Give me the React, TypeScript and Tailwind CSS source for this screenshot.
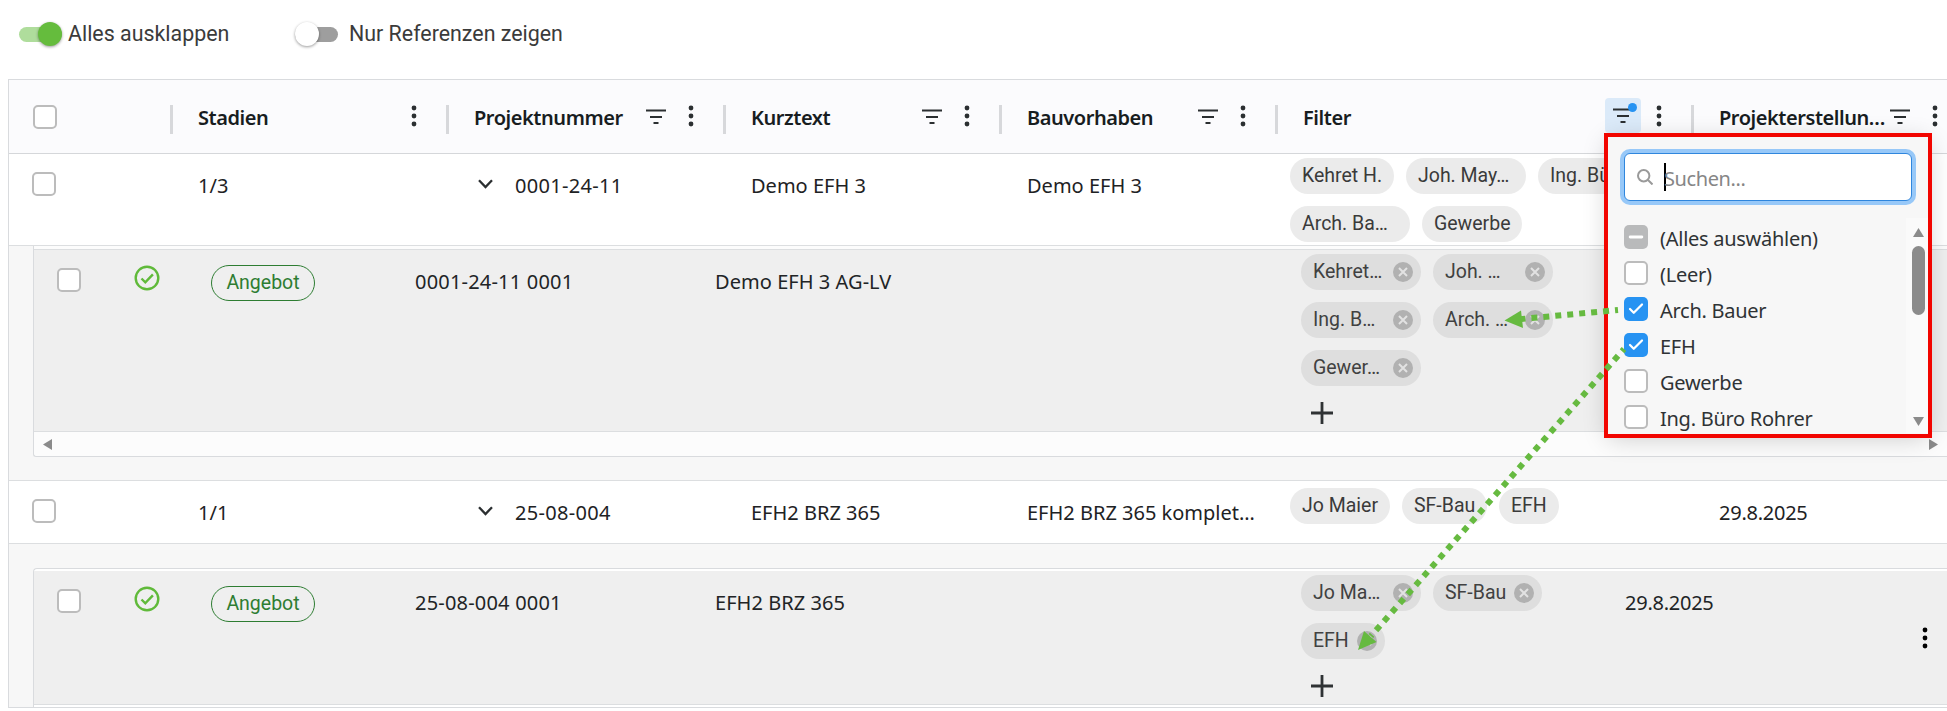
import type { ReactNode } from 'react';
import { Check, Minus } from 'lucide-react';

type CheckState = 'off' | 'on' | 'partial';

interface ChipData {
  label: string;
  width: string;
}

interface DetailData {
  number: string;
  text: string;
  chipRows: ChipData[][];
  date?: string;
  menu?: boolean;
}

const FILTER_OPTIONS: { label: string; state: CheckState }[] = [
  { label: '(Alles auswählen)', state: 'partial' },
  { label: '(Leer)', state: 'off' },
  { label: 'Arch. Bauer', state: 'on' },
  { label: 'EFH', state: 'on' },
  { label: 'Gewerbe', state: 'off' },
  { label: 'Ing. Büro Rohrer', state: 'off' },
];

const DETAILS: DetailData[] = [
  {
    number: '0001-24-11 0001',
    text: 'Demo EFH 3 AG-LV',
    chipRows: [
      [
        { label: 'Kehret…', width: 'w-[120px]' },
        { label: 'Joh. …', width: 'w-[120px]' },
      ],
      [
        { label: 'Ing. B…', width: 'w-[120px]' },
        { label: 'Arch. …', width: 'w-[120px]' },
      ],
      [{ label: 'Gewer…', width: 'w-[120px]' }],
    ],
  },
  {
    number: '25-08-004 0001',
    text: 'EFH2 BRZ 365',
    chipRows: [
      [
        { label: 'Jo Ma…', width: 'w-[120px]' },
        { label: 'SF-Bau', width: 'w-[109px]' },
      ],
      [{ label: 'EFH', width: 'w-[84px]' }],
    ],
    date: '29.8.2025',
    menu: true,
  },
];

function Checkbox({ state = 'off' }: { state?: CheckState }) {
  if (state === 'off') {
    return <div className="size-6 shrink-0 rounded-[5px] border-2 border-[#bcbcbc] bg-white" />;
  }
  if (state === 'partial') {
    return (
      <div className="flex size-6 shrink-0 items-center justify-center rounded-[5px] bg-[#b9babb] text-white">
        <Minus className="size-5" strokeWidth={3.4} />
      </div>
    );
  }
  return (
    <div className="flex size-6 shrink-0 items-center justify-center rounded-[5px] bg-[#2793f2] text-white">
      <Check className="size-[18px]" strokeWidth={3} />
    </div>
  );
}

function Dots({ className = 'text-[#2b2f31]' }: { className?: string }) {
  return (
    <svg className={`h-[22px] w-[6px] shrink-0 ${className}`} viewBox="0 0 6 22" fill="currentColor">
      <circle cx="3" cy="3" r="2.4" />
      <circle cx="3" cy="11" r="2.4" />
      <circle cx="3" cy="19" r="2.4" />
    </svg>
  );
}

function FilterIcon() {
  return (
    <svg className="h-4 w-5 shrink-0 text-[#2b2f31]" viewBox="0 0 20 16" stroke="currentColor" strokeWidth="2.2">
      <path d="M0 1.5H20M4 8H16M7.5 14H12.5" />
    </svg>
  );
}

function HeaderCell({
  label,
  width,
  filter = true,
  active = false,
  pad = 'pr-[29px]',
}: {
  label: string;
  width: string;
  filter?: boolean;
  active?: boolean;
  pad?: string;
}) {
  return (
    <div className={`flex shrink-0 items-center ${width} ${pad}`}>
      <div className="mt-[6px] h-[29px] w-[3px] shrink-0 bg-[#d7d8db]" />
      <span className="mt-[3px] ml-[25px] w-0 flex-1 text-[20px] leading-7 font-semibold tracking-[-0.45px] whitespace-nowrap text-[#181d1f]">
        {label}
      </span>
      {filter && !active && <FilterIcon />}
      {active && (
        <div className="relative -mt-[2px] mr-[-7px] flex h-[35px] w-9 items-center justify-center rounded-[4px] bg-[#dbeaf9]">
          <FilterIcon />
          <span className="absolute top-[5px] right-1 size-[9px] rounded-full bg-[#2793f2]" />
        </div>
      )}
      <div className="-mt-px ml-[22px] flex">
        <Dots />
      </div>
    </div>
  );
}

function Toggle({ on }: { on: boolean }) {
  return (
    <div className={`flex h-[15px] w-[43px] items-center rounded-full ${on ? 'justify-end bg-[#afdd9c]' : 'bg-[#9e9e9e]'}`}>
      <div
        className={`size-6 shrink-0 rounded-full shadow-[0_1px_3px_rgba(0,0,0,0.4)] ${on ? 'bg-[#65bc3d]' : 'bg-white'}`}
      />
    </div>
  );
}

function Chip({ label, width }: ChipData) {
  return (
    <div
      className={`h-9 shrink-0 rounded-full bg-[#ebebeb] pl-3 font-[Roboto] text-[19.5px] leading-[35px] whitespace-nowrap text-[#3a3a3a] ${width}`}
    >
      {label}
    </div>
  );
}

function RemovableChip({ label, width }: ChipData) {
  return (
    <div
      className={`flex h-9 shrink-0 items-center justify-between rounded-full bg-[#dedede] pr-2 pl-3 font-[Roboto] text-[19.5px] leading-9 whitespace-nowrap text-[#414141] ${width}`}
    >
      <span>{label}</span>
      <svg className="size-5 shrink-0" viewBox="0 0 20 20">
        <circle cx="10" cy="10" r="10" fill="#b1b1b1" />
        <path d="M6 6l8 8M14 6l-8 8" stroke="#e2e2e2" strokeWidth="2" />
      </svg>
    </div>
  );
}

function ProjectRow({
  count,
  number,
  name,
  project,
  date,
  height,
  children,
}: {
  count: string;
  number: string;
  name: string;
  project: string;
  date?: string;
  height: string;
  children: ReactNode;
}) {
  return (
    <div className={`flex shrink-0 border-b border-[#dcdee0] bg-white text-[20px] leading-7 whitespace-nowrap text-[#1e2224] ${height}`}>
      <div className="w-[161px] shrink-0 pt-[18px] pl-[23px]">
        <Checkbox />
      </div>
      <div className="w-[276px] shrink-0 pt-[18px] pl-[28px]">{count}</div>
      <div className="flex w-[277px] shrink-0 pt-[18px] pl-[32px]">
        <svg className="mt-[7px] mr-[22px] h-[10px] w-[15px]" viewBox="0 0 15 10" fill="none" stroke="#2b2f31" strokeWidth="2.3">
          <path d="M1 1.2L7.5 8L14 1.2" />
        </svg>
        <span className="tracking-[0.3px]">{number}</span>
      </div>
      <div className="w-[276px] shrink-0 pt-[18px] pl-[28px]">{name}</div>
      <div className="w-[276px] shrink-0 pt-[18px] pl-[28px]">{project}</div>
      <div className="w-[416px] shrink-0 pl-[15px]">{children}</div>
      <div className="pt-[18px] pl-[28px] tracking-[-0.25px]">{date}</div>
    </div>
  );
}

function DetailRow({ detail, height }: { detail: DetailData; height: string }) {
  return (
    <div className={`flex shrink-0 border-b border-[#dcdee0] bg-[#efefef] text-[20px] leading-7 whitespace-nowrap text-[#212426] ${height}`}>
      <div className="w-[100px] shrink-0 pt-[18px] pl-[23px]">
        <Checkbox />
      </div>
      <svg className="mt-[15px] size-[26px] shrink-0" viewBox="0 0 26 26" fill="none" stroke="#60ba3a" strokeWidth="2.4">
        <circle cx="13" cy="13" r="11.3" />
        <path d="M7.5 13.5l3.8 3.8 7.6-8" />
      </svg>
      <div className="w-[255px] shrink-0 pt-[15px] pl-[51px]">
        <div className="h-9 w-[104px] rounded-full border-[1.5px] border-[#2e7d32] text-center font-[Roboto] text-[19.5px] leading-[34px] text-[#2e7d32]">
          Angebot
        </div>
      </div>
      <div className="w-[300px] shrink-0 pt-[18px] tracking-[0.2px]">{detail.number}</div>
      <div className="w-[586px] shrink-0 pt-[18px] tracking-[0.05px]">{detail.text}</div>
      <div className="flex w-[324px] shrink-0 flex-col gap-3 pt-1">
        {detail.chipRows.map((row, index) => (
          <div key={index} className="flex gap-3">
            {row.map((chip) => (
              <RemovableChip key={chip.label} {...chip} />
            ))}
          </div>
        ))}
        <svg className="mt-[4px] ml-[10px] size-[22px]" viewBox="0 0 22 22" stroke="#2f3234" strokeWidth="2.8">
          <path d="M11 0V22M0 11H22" />
        </svg>
      </div>
      <div className="w-[297px] shrink-0 pt-[18px] tracking-[-0.25px]">{detail.date}</div>
      {detail.menu && (
        <div className="flex items-center">
          <Dots className="text-black" />
        </div>
      )}
    </div>
  );
}

function FilterPopup() {
  return (
    <div className="absolute top-[133px] left-[1604px] flex h-[305px] w-[328px] flex-col overflow-hidden border-4 border-[#f20500] bg-[#f7f7f7]">
      <div className="mx-4 mt-4 flex h-12 shrink-0 items-center rounded-[6px] border border-[#2f86dd] bg-white shadow-[0_0_0_4px_#97c8f8]">
        <svg className="ml-3 size-4" viewBox="0 0 16 16" fill="none" stroke="#9a9a9a" strokeWidth="2">
          <circle cx="6.7" cy="6.7" r="5.7" />
          <path d="M11 11l4.5 4.5" />
        </svg>
        <div className="ml-[11px] h-7 w-[2px] bg-black" />
        <span className="-ml-[2px] pt-[3px] text-[20px] tracking-[-0.4px] text-[#868686]">Suchen...</span>
      </div>
      <div className="mt-[17px] flex flex-1">
        <div className="flex flex-1 flex-col gap-3 pt-[7px] pl-4">
          {FILTER_OPTIONS.map((option) => (
            <div key={option.label} className="flex h-6 items-center gap-3">
              <Checkbox state={option.state} />
              <span className="pt-[4px] text-[20px] leading-6 tracking-[-0.27px] whitespace-nowrap text-[#2f3335]">
                {option.label}
              </span>
            </div>
          ))}
        </div>
        <div className="flex h-[215px] w-[22px] flex-col items-center bg-[#fafafa] pt-[10px] pl-[3px]">
          <svg className="h-[9px] w-[11px] shrink-0" viewBox="0 0 11 9" fill="#8b8b8b">
            <path d="M5.5 0L11 9H0Z" />
          </svg>
          <div className="mt-[9px] h-[69px] w-[13px] shrink-0 rounded-full bg-[#8b8b8b]" />
          <svg className="mt-[102px] h-[9px] w-[11px] shrink-0" viewBox="0 0 11 9" fill="#8b8b8b">
            <path d="M0 0H11L5.5 9Z" />
          </svg>
        </div>
      </div>
    </div>
  );
}

/** Dotted arrows from the checked options to the matching chips */
function Arrows() {
  return (
    <svg className="pointer-events-none absolute top-0 left-0" width="1947" height="711" fill="none">
      <g stroke="#66ba40" strokeWidth="6" strokeDasharray="6 6">
        <path d="M1618 310L1516 319.5" strokeDashoffset="3" />
        <path d="M1624 349L1371 636" strokeDashoffset="3" />
      </g>
      <path d="M1504.5 320.5L1521 310.5L1523 328Z" fill="#66ba40" />
      <path d="M1358 650L1364 631L1376.5 642Z" fill="#66ba40" />
    </svg>
  );
}

export default function App() {
  return (
    <div className="relative flex h-[711px] w-[1947px] flex-col overflow-hidden bg-white font-['Noto_Sans',sans-serif]">
      {/* Toggles */}
      <div className="flex h-[79px] shrink-0 items-start pt-[22px] pl-[19px] font-[Roboto] text-[21.4px] leading-6 text-[#3b3b3b]">
        <div className="flex h-6 w-[276px] items-center gap-[6px]">
          <Toggle on />
          <span>Alles ausklappen</span>
        </div>
        <div className="flex h-6 items-center gap-[11px]">
          <Toggle on={false} />
          <span>Nur Referenzen zeigen</span>
        </div>
      </div>

      {/* Grid */}
      <div className="ml-2 flex h-[629px] shrink-0 flex-col overflow-hidden border-y border-l border-[#d9dbde] bg-[#f7f7f7]">
        <div className="flex h-[74px] shrink-0 border-b border-[#d5d7da] bg-[#fbfbfd]">
          <div className="flex w-[161px] shrink-0 items-center pl-6">
            <Checkbox />
          </div>
          <HeaderCell label="Stadien" width="w-[276px]" filter={false} />
          <HeaderCell label="Projektnummer" width="w-[277px]" />
          <HeaderCell label="Kurztext" width="w-[276px]" />
          <HeaderCell label="Bauvorhaben" width="w-[276px]" />
          <HeaderCell label="Filter" width="w-[416px]" active />
          <HeaderCell label="Projekterstellun…" width="w-[256px]" pad="pr-[9px]" />
        </div>

        <ProjectRow count="1/3" number="0001-24-11" name="Demo EFH 3" project="Demo EFH 3" height="h-[92px]">
          <div className="flex gap-3 pt-1">
            <Chip label="Kehret H." width="w-[104px]" />
            <Chip label="Joh. May…" width="w-[120px]" />
            <Chip label="Ing. Büro…" width="w-[120px]" />
          </div>
          <div className="flex gap-3 pt-3">
            <Chip label="Arch. Ba…" width="w-[120px]" />
            <Chip label="Gewerbe" width="w-[100px]" />
          </div>
        </ProjectRow>

        <div className="ml-6 flex h-[211px] shrink-0 flex-col rounded-bl-[3px] border-b border-l border-[#d9dbde] bg-[#fcfcfc]">
          <div className="h-1 shrink-0 border-b border-[#dcdee0]" />
          <DetailRow detail={DETAILS[0]} height="h-[182px]" />
          <div className="flex flex-1 items-center justify-between pr-[9px] pl-[9px]">
            <svg className="h-[11px] w-[9px]" viewBox="0 0 9 11" fill="#8b8b8b">
              <path d="M9 0V11L0 5.5Z" />
            </svg>
            <svg className="h-[11px] w-[9px]" viewBox="0 0 9 11" fill="#8b8b8b">
              <path d="M0 0V11L9 5.5Z" />
            </svg>
          </div>
        </div>

        <div className="mt-[23px] h-px shrink-0 bg-[#dcdee0]" />
        <ProjectRow
          count="1/1"
          number="25-08-004"
          name="EFH2 BRZ 365"
          project="EFH2 BRZ 365 komplet…"
          date="29.8.2025"
          height="h-[63px]"
        >
          <div className="flex gap-3 pt-[7px]">
            <Chip label="Jo Maier" width="w-[100px]" />
            <Chip label="SF-Bau" width="w-[85px]" />
            <Chip label="EFH" width="w-[60px]" />
          </div>
        </ProjectRow>

        <div className="mt-6 ml-6 flex flex-1 flex-col rounded-tl-[4px] border-t border-l border-[#d9dbde] bg-white pt-[2px]">
          <DetailRow detail={DETAILS[1]} height="h-[134px]" />
        </div>
      </div>

      {/* Soft shadow around the filter menu */}
      <div className="absolute top-[137px] left-[1608px] h-[297px] w-[320px] shadow-[0_4px_24px_rgba(0,0,0,0.2)]" />
      <FilterPopup />
      <Arrows />
    </div>
  );
}
